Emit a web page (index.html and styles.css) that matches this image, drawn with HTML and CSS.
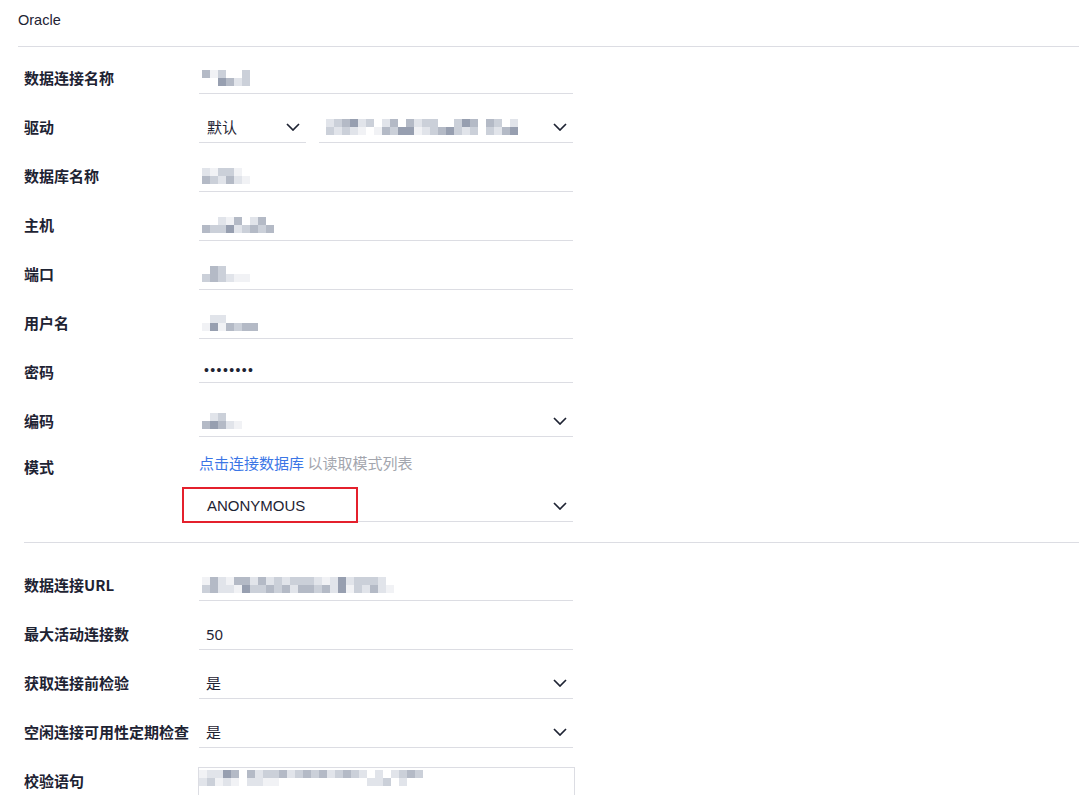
FILE: index.html
```html
<!DOCTYPE html>
<html lang="zh-CN">
<head>
  <meta charset="UTF-8">
  <title>Oracle</title>
  <link rel="stylesheet" href="styles.css">
</head>
<body>
  <div class="header">Oracle</div>

  <div class="form">
    <div class="row">
      <div class="label">数据连接名称</div>
      <div class="field">
        <span class="mz"><i class="s2"></i><i></i><i class="s5"></i><i></i><i class="s3"></i><i class="s1"></i><i></i><i class="s2"></i><i></i><i class="s4"></i><i class="s3"></i><i class="s3"></i></span>
      </div>
    </div>

    <div class="row">
      <div class="label">驱动</div>
      <div class="field split">
        <div class="select small">
          <span class="val">默认</span>
          <svg class="chev" width="14" height="8" viewBox="0 0 14 8"><path d="M1 1L7 7L13 1"/></svg>
        </div>
        <div class="select grow">
          <span class="mz"><i class="s4"></i><i class="s3"></i><i class="s3"></i><i class="s4"></i><i class="s2"></i><i class="s3"></i><i class="s1"></i><i class="s4"></i><i class="s4"></i><i class="s5"></i><i class="s3"></i><i></i><i></i><i class="s5"></i><i class="s4"></i><i class="s2"></i><i class="s2"></i><i class="s3"></i><i></i><i class="s1"></i><i class="s2"></i><i class="s1"></i><i class="s4"></i><i class="s5"></i><i class="s3"></i><i class="s4"></i><i class="s3"></i><i class="s3"></i><i></i><i class="s2"></i><i></i><i class="s1"></i><i class="s3"></i><i class="s3"></i><i class="s1"></i><i class="s4"></i><i class="s2"></i><i class="s3"></i><i></i><i></i><i class="s2"></i><i class="s3"></i><i class="s3"></i><i class="s4"></i><i></i><i class="s2"></i><i class="s4"></i><i class="s1"></i></span>
          <svg class="chev" width="14" height="8" viewBox="0 0 14 8"><path d="M1 1L7 7L13 1"/></svg>
        </div>
      </div>
    </div>

    <div class="row">
      <div class="label">数据库名称</div>
      <div class="field">
        <span class="mz"><i class="s4"></i><i class="s2"></i><i class="s5"></i><i class="s3"></i><i class="s3"></i><i class="s4"></i><i class="s3"></i><i class="s2"></i><i class="s5"></i><i class="s4"></i><i></i><i class="s5"></i></span>
      </div>
    </div>

    <div class="row">
      <div class="label">主机</div>
      <div class="field">
        <span class="mz"><i></i><i class="s2"></i><i></i><i class="s3"></i><i class="s4"></i><i class="s3"></i><i class="s5"></i><i class="s1"></i><i class="s2"></i><i class="s4"></i><i></i><i class="s3"></i><i class="s4"></i><i class="s2"></i><i class="s2"></i><i class="s3"></i><i></i><i class="s2"></i></span>
      </div>
    </div>

    <div class="row">
      <div class="label">端口</div>
      <div class="field">
        <span class="mz"><i></i><i class="s3"></i><i class="s2"></i><i class="s2"></i><i class="s3"></i><i class="s3"></i><i></i><i class="s4"></i><i></i><i class="s5"></i><i></i><i class="s5"></i></span>
      </div>
    </div>

    <div class="row">
      <div class="label">用户名</div>
      <div class="field">
        <span class="mz"><i></i><i class="s5"></i><i class="s4"></i><i class="s1"></i><i class="s4"></i><i class="s5"></i><i></i><i class="s2"></i><i></i><i class="s3"></i><i></i><i class="s2"></i><i></i><i class="s2"></i></span>
      </div>
    </div>

    <div class="row">
      <div class="label">密码</div>
      <div class="field pwd">
        <span class="dots">••••••••</span>
      </div>
    </div>

    <div class="row">
      <div class="label">编码</div>
      <div class="field select">
        <span class="mz"><i></i><i class="s2"></i><i class="s4"></i><i class="s1"></i><i class="s3"></i><i class="s2"></i><i></i><i class="s4"></i><i></i><i class="s5"></i></span>
        <svg class="chev" width="14" height="8" viewBox="0 0 14 8"><path d="M1 1L7 7L13 1"/></svg>
      </div>
    </div>

    <div class="row mode">
      <div class="label">模式</div>
      <div class="mode-col">
        <div class="hint"><span class="link">点击连接数据库</span> 以读取模式列表</div>
        <div class="field select boxed">
          <span class="val upper">ANONYMOUS</span>
          <svg class="chev" width="14" height="8" viewBox="0 0 14 8"><path d="M1 1L7 7L13 1"/></svg>
          <span class="mark"></span>
        </div>
      </div>
    </div>
  </div>

  <div class="divider"></div>

  <div class="form second">
    <div class="row">
      <div class="label">数据连接URL</div>
      <div class="field">
        <span class="mz"><i class="s5"></i><i class="s3"></i><i class="s2"></i><i class="s2"></i><i class="s4"></i><i class="s4"></i><i class="s5"></i><i class="s4"></i><i class="s2"></i><i class="s5"></i><i class="s2"></i><i class="s1"></i><i class="s4"></i><i class="s3"></i><i class="s2"></i><i class="s3"></i><i class="s4"></i><i class="s2"></i><i class="s3"></i><i class="s3"></i><i class="s4"></i><i class="s2"></i><i class="s3"></i><i class="s4"></i><i class="s3"></i><i class="s2"></i><i class="s3"></i><i class="s2"></i><i class="s4"></i><i class="s3"></i><i class="s5"></i><i class="s2"></i><i class="s4"></i><i class="s4"></i><i class="s1"></i><i class="s1"></i><i class="s4"></i><i class="s5"></i><i class="s3"></i><i class="s3"></i><i class="s3"></i><i class="s4"></i><i class="s3"></i><i class="s2"></i><i class="s4"></i><i class="s4"></i><i></i><i class="s5"></i></span>
      </div>
    </div>

    <div class="row">
      <div class="label">最大活动连接数</div>
      <div class="field"><span class="val">50</span></div>
    </div>

    <div class="row">
      <div class="label">获取连接前检验</div>
      <div class="field select">
        <span class="val">是</span>
        <svg class="chev" width="14" height="8" viewBox="0 0 14 8"><path d="M1 1L7 7L13 1"/></svg>
      </div>
    </div>

    <div class="row">
      <div class="label">空闲连接可用性定期检查</div>
      <div class="field select">
        <span class="val">是</span>
        <svg class="chev" width="14" height="8" viewBox="0 0 14 8"><path d="M1 1L7 7L13 1"/></svg>
      </div>
    </div>

    <div class="row area-row">
      <div class="label">校验语句</div>
      <div class="area">
        <span class="mz"><i class="s5"></i><i class="s4"></i><i class="s4"></i><i class="s3"></i><i class="s4"></i><i class="s5"></i><i class="s1"></i><i class="s4"></i><i class="s2"></i><i class="s5"></i><i></i><i></i><i class="s2"></i><i class="s4"></i><i class="s4"></i><i class="s4"></i><i class="s3"></i><i class="s5"></i><i class="s3"></i><i class="s5"></i><i class="s2"></i><i></i><i class="s4"></i><i></i><i class="s3"></i><i></i><i class="s2"></i><i></i><i class="s3"></i><i></i><i class="s2"></i><i></i><i class="s4"></i><i></i><i class="s3"></i><i></i><i class="s2"></i><i></i><i class="s3"></i><i></i><i class="s4"></i><i></i><i></i><i class="s4"></i><i class="s4"></i><i class="s4"></i><i></i><i class="s3"></i><i class="s4"></i><i></i><i class="s3"></i><i class="s4"></i><i class="s2"></i><i></i><i class="s3"></i><i></i></span>
      </div>
    </div>
  </div>
</body>
</html>
```

FILE: styles.css
```css
html {
  overflow: hidden;
}

body {
  margin: 0;
  background: #fff;
  color: #1e2333;
  font-family: "Liberation Sans", "Noto Sans CJK SC", sans-serif;
  font-size: 15px;
}

.header {
  margin-left: 18px;
  padding: 10px 0 16px;
  line-height: 20px;
  font-size: 14.5px;
  border-bottom: 1px solid #dcdde3;
}

.form {
  padding-left: 24px;
  margin-top: 15px;
}

.form.second {
  margin-top: 26px;
}

.row {
  display: flex;
  align-items: center;
  margin-bottom: 17px;
}

.label {
  width: 175px;
  font-family: "Noto Sans CJK SC", sans-serif;
  font-weight: bold;
  font-size: 15px;
  line-height: 32px;
  white-space: nowrap;
}

.field {
  width: 374px;
  height: 32px;
  box-sizing: border-box;
  border-bottom: 1px solid #dcdde3;
  display: flex;
  align-items: center;
  padding-left: 3px;
  position: relative;
}

.field.split {
  border-bottom: none;
  padding-left: 0;
  gap: 13px;
}

.select {
  display: flex;
  align-items: center;
  justify-content: space-between;
  height: 32px;
  box-sizing: border-box;
  border-bottom: 1px solid #dcdde3;
  padding-right: 6px;
}

.select.small {
  width: 107px;
  padding-left: 8px;
}

.select.grow {
  flex: 1;
  padding-left: 7px;
}

.field.select {
  padding-left: 3px;
}

.val {
  padding-left: 4px;
  font-family: "Noto Sans", "Noto Sans CJK SC", sans-serif;
  font-size: 15px;
}

.select.small .val {
  padding-left: 0;
}

.val.upper {
  padding-left: 5px;
  font-family: "Liberation Sans", sans-serif;
}

.chev path {
  fill: none;
  stroke: #1e2333;
  stroke-width: 1.7;
}

.field.pwd {
  height: 27px;
  align-self: flex-start;
  align-items: flex-end;
  padding-bottom: 4px;
}

.dots {
  font-size: 14px;
  letter-spacing: 1.4px;
  padding-left: 2px;
}

.row.mode {
  align-items: flex-start;
  margin-top: -1px;
  margin-bottom: 0;
}

.row.mode .label {
  line-height: 28px;
}

.mode-col {
  display: flex;
  flex-direction: column;
}

.hint {
  font-family: "Noto Sans CJK SC", sans-serif;
  line-height: 20px;
  color: #a3a6ae;
  margin-bottom: 17px;
}

.link {
  color: #3b76e6;
}

.mark {
  position: absolute;
  left: -17px;
  top: -3px;
  width: 176px;
  height: 36px;
  box-sizing: border-box;
  border: 2px solid #e4202c;
}

.divider {
  margin: 20px 0 0 24px;
  border-top: 1px solid #dcdde3;
}

.area-row {
  align-items: flex-start;
  margin-top: 19px;
}

.area-row .label {
  line-height: 28px;
}

.area {
  width: 377px;
  height: 60px;
  box-sizing: border-box;
  border: 1px solid #dcdde3;
  padding: 2px 0 0 0;
  margin-left: -1px;
}

/* blurred values */
.mz {
  display: grid;
  grid-template-rows: 8px 8px;
  grid-auto-columns: 8px;
  grid-auto-flow: column;
  filter: blur(0.4px);
}

.mz i {
  display: block;
}

.s1 { background: #979fb0; }
.s2 { background: #b4bac6; }
.s3 { background: #cbd0d9; }
.s4 { background: #e1e4ea; }
.s5 { background: #f1f2f5; }
```
